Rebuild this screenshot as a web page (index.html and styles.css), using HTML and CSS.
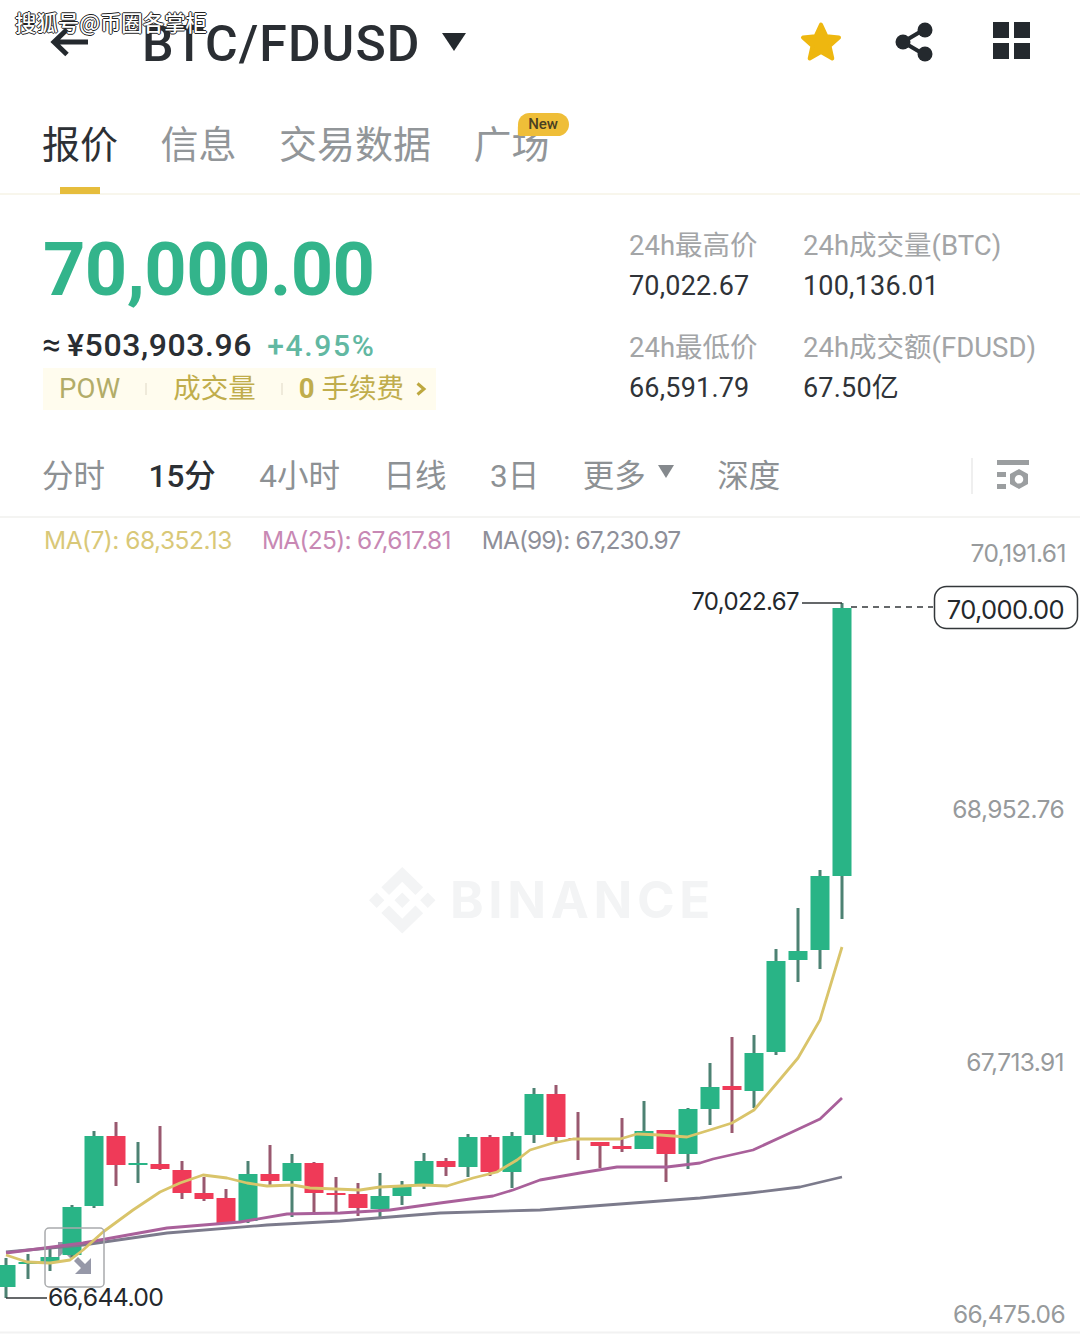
FILE: index.html
```html
<!DOCTYPE html>
<html lang="zh-CN">
<head>
<meta charset="utf-8">
<title>BTC/FDUSD</title>
<link rel="stylesheet" href="styles.css">
</head>
<body>
<main class="page">
  <div class="credit">搜狐号@币圈各掌柜</div>

  <header class="topbar">
    <svg class="back" viewBox="0 0 40 30"><path d="M38 15H4M17 2.500L4 15l13 12.500"/></svg>
    <h1 class="pair">BTC/FDUSD</h1>
    <span class="caret"></span>
    <div class="actions">
      <svg class="star" viewBox="0 0 42 42"><path d="M21 3.500l5.300 11.700 12.700 1.300-9.500 8.500 2.800 12.500-11.300-6.500-11.300 6.500 2.800-12.500-9.500-8.500 12.700-1.300z"/></svg>
      <svg class="share" viewBox="0 0 40 42"><path class="share-link" d="M30 8L8 21l22 13"/><circle cx="8" cy="21" r="7.500"/><circle cx="30" cy="9" r="7.500"/><circle cx="30" cy="33" r="7.500"/></svg>
      <div class="tiles"><i></i><i></i><i></i><i></i></div>
    </div>
  </header>

  <nav class="tabs">
    <a class="tab tab-on">报价</a>
    <a class="tab">信息</a>
    <a class="tab">交易数据</a>
    <a class="tab tab-new">广场<b class="badge">New</b></a>
  </nav>

  <section class="quote">
    <div class="quote-main">
      <div class="last">70,000.00</div>
      <div class="fiat"><span class="approx">≈</span><span class="cny">¥503,903.96</span><span class="pct">+4.95%</span></div>
      <div class="tags">
        <span class="tag-pow">POW</span><i class="tag-sep"></i>
        <span class="tag-vol">成交量</span><i class="tag-sep sep-b"></i>
        <span class="tag-fee"><b>0</b> 手续费</span>
        <svg class="tag-arrow" viewBox="0 0 12 16"><path d="M2.500 2.500L9 8l-6.500 5.500"/></svg>
      </div>
    </div>
    <dl class="stats">
      <div class="stat"><dt>24h最高价</dt><dd>70,022.67</dd></div>
      <div class="stat"><dt>24h成交量(BTC)</dt><dd>100,136.01</dd></div>
      <div class="stat"><dt>24h最低价</dt><dd>66,591.79</dd></div>
      <div class="stat"><dt>24h成交额(FDUSD)</dt><dd>67.50亿</dd></div>
    </dl>
  </section>

  <nav class="ranges">
    <a>分时</a>
    <a class="range-on">15分</a>
    <a>4小时</a>
    <a>日线</a>
    <a>3日</a>
    <a class="more">更多<span class="more-caret"></span></a>
    <a>深度</a>
    <i class="range-sep"></i>
    <svg class="settings" viewBox="0 0 34 32"><path d="M1 0h32v5H1zM1 12h9v5H1zM1 24h9v5H1z"/><path fill-rule="evenodd" d="M23 9l9 5v10l-9 5-9-5V14zM23 15a4.300 4.300 0 1 0 0 8.600A4.300 4.300 0 0 0 23 15z"/></svg>
  </nav>

  <div class="legend">
    <span class="ma7">MA(7): 68,352.13</span>
    <span class="ma25">MA(25): 67,617.81</span>
    <span class="ma99">MA(99): 67,230.97</span>
    <span class="axis-top">70,191.61</span>
  </div>

  <!-- Chart coordinates: x in page pixels, y offset by the viewBox origin -->
  <svg class="chart" viewBox="0 565 1080 771">
    <g class="mark" transform="translate(369 867) scale(.525)">
      <path d="M38.170 53.200L63.300 28.070l25.140 25.140 14.620-14.620L63.300 0 23.550 38.750z"/>
      <path d="M0 63.300l14.620-14.620L29.240 63.300 14.620 77.920z"/>
      <path d="M38.170 73.400L63.300 98.530l25.140-25.140 14.630 14.610L63.300 126.600 23.550 87.850z"/>
      <path d="M97.360 63.300l14.620-14.620 14.620 14.620-14.620 14.620z"/>
      <path d="M78.120 63.290L63.300 48.460 48.480 63.280 63.300 78.110z"/>
    </g>
    <text class="mark-text" x="450" y="918">BINANCE</text>

    <!-- jump-to-latest arrow that sits behind the candles -->
    <path class="jump-arrow" d="M58 1258v-16h16l-6 6 7 7-4 4-7-7z"/>

    <!-- wicks -->
    <path class="wick-up" d="M6 1258V1298M28 1254V1279M50 1247V1271M72 1205V1257M94 1131V1208M138 1142V1183M248 1161V1223M292 1154V1217M380 1173V1217M402 1181V1205M424 1153V1189M468 1134V1177M512 1132V1188M534 1088V1143M644 1101V1149M688 1108V1169M710 1063V1125M754 1035V1108M776 949V1055M798 908V982M820 870V969M842 603V919"/>
    <path class="wick-down" d="M116 1122V1186M160 1126V1170M182 1161V1199M204 1177V1201M226 1189V1223M270 1145V1185M314 1162V1213M336 1177V1213M358 1183V1216M446 1158V1176M490 1135V1176M556 1085V1142M578 1112V1160M600 1142V1168M622 1118V1152M666 1130V1182M732 1037V1133"/>

    <!-- rising bodies -->
    <g class="up">
      <rect x="-3.500" y="1265" width="19" height="22"/>
      <rect x="18.500" y="1262" width="19" height="2"/>
      <rect x="40.500" y="1257" width="19" height="5"/>
      <rect x="62.500" y="1207" width="19" height="48"/>
      <rect x="84.500" y="1136" width="19" height="70"/>
      <rect x="128.500" y="1163" width="19" height="2"/>
      <rect x="238.500" y="1174" width="19" height="47"/>
      <rect x="282.500" y="1163" width="19" height="18"/>
      <rect x="370.500" y="1196" width="19" height="13"/>
      <rect x="392.500" y="1186" width="19" height="10"/>
      <rect x="414.500" y="1161" width="19" height="23"/>
      <rect x="458.500" y="1137" width="19" height="30"/>
      <rect x="502.500" y="1136" width="19" height="36"/>
      <rect x="524.500" y="1094" width="19" height="41"/>
      <rect x="634.500" y="1131" width="19" height="18"/>
      <rect x="678.500" y="1109" width="19" height="45"/>
      <rect x="700.500" y="1087" width="19" height="22"/>
      <rect x="744.500" y="1053" width="19" height="38"/>
      <rect x="766.500" y="961" width="19" height="91"/>
      <rect x="788.500" y="951" width="19" height="9"/>
      <rect x="810.500" y="876" width="19" height="74"/>
      <rect x="832.500" y="608" width="19" height="268"/>
    </g>

    <!-- falling bodies -->
    <g class="down">
      <rect x="106.500" y="1136" width="19" height="29"/>
      <rect x="150.500" y="1164" width="19" height="5"/>
      <rect x="172.500" y="1170" width="19" height="23"/>
      <rect x="194.500" y="1193" width="19" height="6"/>
      <rect x="216.500" y="1198" width="19" height="25"/>
      <rect x="260.500" y="1174" width="19" height="7"/>
      <rect x="304.500" y="1163" width="19" height="30"/>
      <rect x="326.500" y="1193" width="19" height="2"/>
      <rect x="348.500" y="1194" width="19" height="14"/>
      <rect x="436.500" y="1161" width="19" height="6"/>
      <rect x="480.500" y="1137" width="19" height="35"/>
      <rect x="546.500" y="1094" width="19" height="43"/>
      <rect x="568.500" y="1138" width="19" height="2"/>
      <rect x="590.500" y="1142" width="19" height="4"/>
      <rect x="612.500" y="1146" width="19" height="3"/>
      <rect x="656.500" y="1130" width="19" height="24"/>
      <rect x="722.500" y="1086" width="19" height="4"/>
    </g>

    <!-- moving averages -->
    <polyline class="line-99" points="6,1252 83,1245 167,1233 267,1225 340,1221 440,1213 540,1210 700,1198 750,1193 800,1187 842,1177"/>
    <polyline class="line-25" points="6,1253 83,1243 100,1240 167,1228 240,1222 287,1214 340,1213 390,1210 440,1203 493,1196 513,1190 540,1180 580,1173 617,1167 667,1167 700,1163 713,1159 753,1150 790,1133 820,1119 842,1098"/>
    <polyline class="line-7" points="6,1255 27,1262 50,1263 70,1260 83,1250 103,1232 133,1210 160,1192 180,1183 203,1175 227,1178 247,1183 267,1186 293,1185 310,1188 360,1190 380,1187 423,1185 447,1186 473,1178 497,1172 517,1160 530,1150 553,1143 573,1139 620,1139 637,1134 660,1135 687,1137 713,1129 732,1123 754,1110 777,1083 798,1058 820,1020 842,947"/>

    <!-- high, low and last price callouts -->
    <path class="lead" d="M802 603H842M6 1298H47"/>
    <path class="dash" d="M851 607H933"/>
    <rect class="last-box" x="934.500" y="586.500" width="143" height="42" rx="12"/>
    <text class="note note-high" x="799" y="610" text-anchor="end">70,022.67</text>
    <text class="note" x="1064" y="619" text-anchor="end">70,000.00</text>
    <text class="note note-low" x="48" y="1306">66,644.00</text>

    <text class="axis" x="1064" y="818" text-anchor="end">68,952.76</text>
    <text class="axis" x="1064" y="1071" text-anchor="end">67,713.91</text>
    <text class="axis" x="1065" y="1323" text-anchor="end">66,475.06</text>

    <!-- jump-to-latest control -->
    <rect class="jump" x="45" y="1228" width="59" height="59" rx="4"/>
    <path class="jump-arrow" d="M91 1258v16H75l6-6-7-7 4-4 7 7z"/>

    <path class="floor" d="M0 1332.500H1080"/>
  </svg>
</main>
</body>
</html>
```
FILE: styles.css
```css
* { box-sizing: border-box; }

html, body {
  margin: 0;
  background: #fff;
}

body {
  font-family: Roboto, "Noto Sans CJK SC", sans-serif;
  color: #24292e;
}

.page {
  position: relative;
  width: 1080px;
  height: 1336px;
  overflow: hidden;
}

dl, dt, dd, h1 { margin: 0; }

/* author credit laid over the header */
.credit {
  position: absolute;
  left: 15px;
  top: 8px;
  z-index: 2;
  font: 500 21.400px/28px "Noto Sans CJK SC", sans-serif;
  color: #fff;
  text-shadow: -1px 0 #222, 1px 0 #222, 0 -1px #222, 0 1px #222;
}

/* top bar */
.topbar {
  display: flex;
  align-items: center;
  height: 84px;
  padding-left: 50px;
}

.back {
  width: 40px;
  height: 30px;
  fill: none;
  stroke: #24292e;
  stroke-width: 5;
}

.pair {
  margin: 4px 0 0 52px;
  font-size: 50px;
  font-weight: 500;
  line-height: 80px;
  letter-spacing: 1.100px;
  color: #2a2e33;
}

.caret {
  width: 0;
  height: 0;
  margin: 0 0 0 21px;
  border-style: solid;
  border-width: 18px 12px 0;
  border-color: #24292e transparent transparent;
}

.actions {
  display: flex;
  align-items: center;
  margin-left: auto;
  padding-right: 50px;
}

.star {
  width: 42px;
  height: 42px;
  fill: #eeb70f;
  stroke: #eeb70f;
  stroke-width: 4;
  stroke-linejoin: round;
}

.share {
  width: 40px;
  height: 42px;
  margin-left: 53px;
  fill: #24292e;
}

.share-link {
  fill: none;
  stroke: #24292e;
  stroke-width: 4;
}

.tiles {
  display: grid;
  grid-template-columns: 16px 16px;
  grid-auto-rows: 16px;
  gap: 5px;
  margin: 0 0 4px 58px;
}

.tiles i { background: #24292e; }

/* section tabs */
.tabs {
  display: flex;
  gap: 42.500px;
  height: 111px;
  padding: 39px 0 0 42px;
  border-bottom: 2px solid #f8f6ec;
}

.tab {
  position: relative;
  font-size: 38px;
  line-height: 44px;
  color: #929699;
  white-space: nowrap;
}

.tab-on { color: #2c3035; }

.tab-on::after {
  content: "";
  position: absolute;
  left: 18px;
  top: 64px;
  width: 40px;
  height: 7px;
  background: #e6bd3c;
}

.badge {
  position: absolute;
  left: 44px;
  top: -10px;
  width: 51px;
  height: 23px;
  border-radius: 12px 12px 12px 2px;
  background: #efbe38;
  font: 500 15px/22px Roboto, sans-serif;
  text-align: center;
  color: #4a4022;
}

/* price summary */
.quote {
  display: flex;
  height: 245px;
  padding-left: 43px;
}

.quote-main { width: 586px; }

.last {
  margin-top: 36px;
  font-size: 74px;
  font-weight: 700;
  line-height: 78px;
  color: #33b48b;
  letter-spacing: -.6px;
}

.fiat {
  display: flex;
  align-items: baseline;
  height: 40px;
  margin-top: 16px;
  line-height: 40px;
}

.approx {
  width: 25px;
  margin-left: -1px;
  font-size: 33px;
}

.cny {
  font-size: 32px;
  font-weight: 500;
  letter-spacing: .6px;
  color: #2a2e33;
}

.pct {
  margin-left: 15px;
  font-size: 30px;
  font-weight: 500;
  letter-spacing: 1.700px;
  color: #62b8a2;
}

.tags {
  display: flex;
  align-items: center;
  width: 393px;
  height: 42px;
  margin-top: 3px;
  padding-left: 16px;
  background: #fffcee;
  color: #c0ad4c;
  font-size: 27.500px;
  line-height: 42px;
}

.tag-pow { color: #b2ac68; letter-spacing: .2px; }

.tag-sep {
  width: 2px;
  height: 12px;
  margin: 0 26px 0 25px;
  background: #efeada;
}

.tag-vol { letter-spacing: 0; }

.sep-b { margin-right: 16px; }

.tag-fee b { font-weight: 700; }

.tag-arrow {
  width: 12px;
  height: 16px;
  margin-left: 11px;
  fill: none;
  stroke: #bda83f;
  stroke-width: 3;
}

.stats {
  display: grid;
  grid-template-columns: 174px auto;
  align-content: start;
  row-gap: 22px;
  padding-top: 31px;
}

.stat dt,
.stat dd {
  line-height: 40px;
  white-space: nowrap;
}

.stat dt {
  font-size: 27.500px;
  color: #a3a5a7;
}

.stat dd {
  font-size: 27px;
  letter-spacing: .2px;
  color: #2f3338;
}

/* interval selector */
.ranges {
  display: flex;
  align-items: center;
  gap: 43.500px;
  height: 78px;
  padding: 0 50px 10px 42px;
  border-bottom: 2px solid #f4f4f2;
  font-size: 31.500px;
  color: #8d9194;
}

.ranges a { white-space: nowrap; }

.range-on {
  font-weight: 500;
  color: #2c3035;
}

.more {
  display: flex;
  align-items: center;
}

.more-caret {
  width: 0;
  height: 0;
  margin: 0 0 4px 12px;
  border-style: solid;
  border-width: 13px 8px 0;
  border-color: #85898d transparent transparent;
}

.range-sep {
  width: 2px;
  height: 36px;
  margin: 6px 0 0 auto;
  background: #efefef;
}

.settings {
  width: 34px;
  height: 32px;
  margin: 6px 0 0 -20px;
  fill: #9b9ea0;
}

/* moving average readout */
.legend {
  display: flex;
  align-items: flex-start;
  height: 47px;
  padding: 7px 14px 0 44px;
  font-family: Inter, sans-serif;
  font-size: 24.500px;
  line-height: 30px;
  letter-spacing: -.5px;
  white-space: nowrap;
}

.ma7 { color: #d9c878; }
.ma25 { margin-left: 30px; letter-spacing: -.7px; color: #c888b4; }
.ma99 { margin-left: 31px; letter-spacing: -.95px; color: #8e8f99; }

.axis-top {
  margin: 13px 0 0 auto;
  color: #979a9c;
}

/* candlestick chart */
.chart {
  display: block;
  width: 1080px;
  height: 771px;
}

.mark { fill: #f3f4f5; }

.mark-text {
  font: 700 51px Inter, sans-serif;
  letter-spacing: 4.600px;
  fill: #f3f4f5;
}

.up { fill: #29b486; }
.down { fill: #ef3a58; }

.wick-up,
.wick-down {
  fill: none;
  stroke-width: 3;
}

.wick-up { stroke: #4d8273; }
.wick-down { stroke: #99586f; }

.line-7,
.line-25,
.line-99 {
  fill: none;
  stroke-width: 2.800;
  stroke-linejoin: round;
}

.line-7 { stroke: #d9c46a; }
.line-25 { stroke: #a9609a; }
.line-99 { stroke: #7c7b8c; }

.lead {
  fill: none;
  stroke: #33373a;
  stroke-width: 1.500;
}

.dash {
  fill: none;
  stroke: #33373a;
  stroke-width: 1.500;
  stroke-dasharray: 6 5;
}

.last-box {
  fill: #fff;
  stroke: #33373a;
  stroke-width: 1.500;
}

.note,
.axis {
  font-family: Inter, sans-serif;
  font-size: 25.500px;
  letter-spacing: -.6px;
}

.axis { font-size: 24.500px; }

.note { fill: #24282c; }
.note-high { font-size: 24px; }
.note-low { font-size: 24.800px; }
.axis { fill: #979a9c; }

.jump {
  fill: none;
  stroke: #a9abad;
  stroke-width: 1.500;
}

.jump-arrow { fill: #9698a8; }

.floor {
  fill: none;
  stroke: #f2f2f2;
  stroke-width: 2;
}
```
